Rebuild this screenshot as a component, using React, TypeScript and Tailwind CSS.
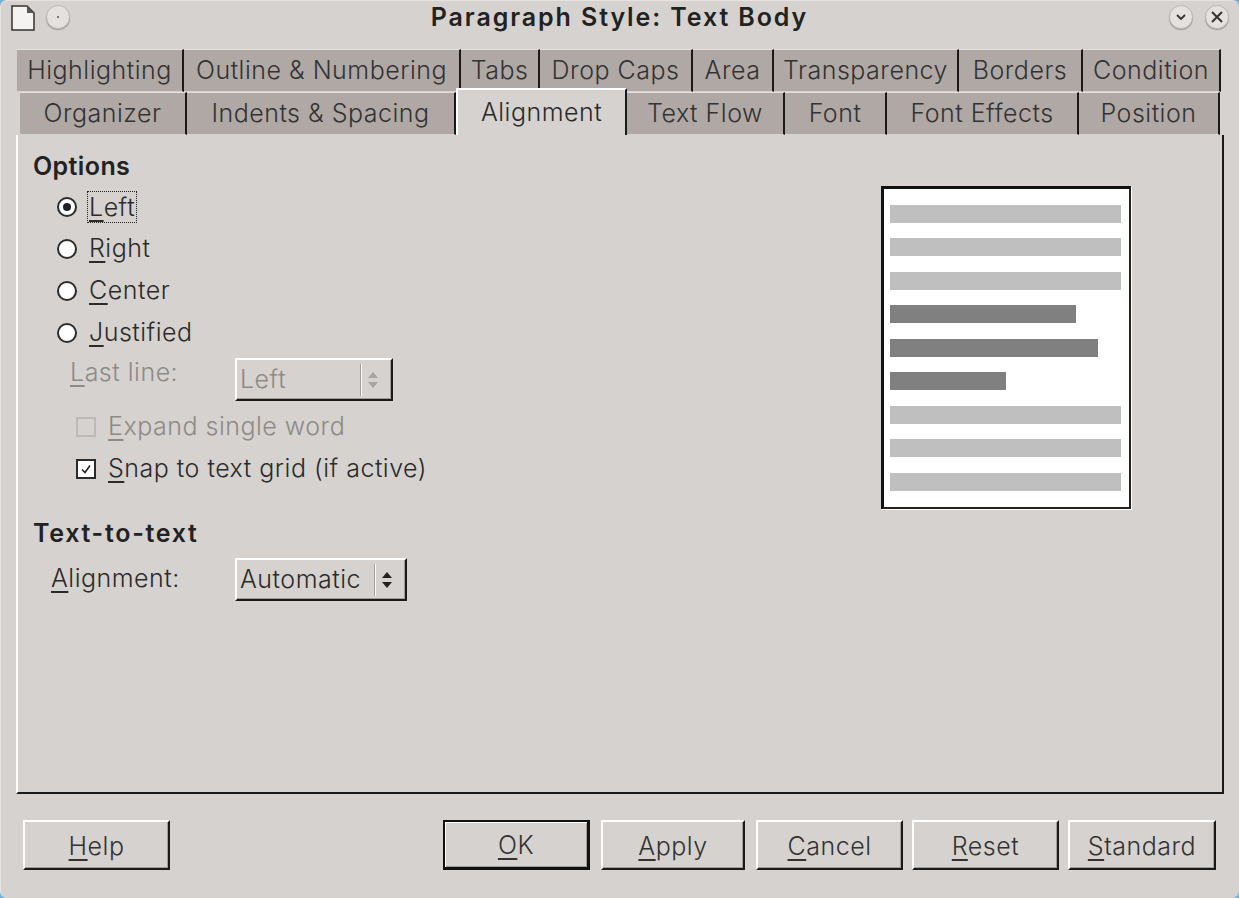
import type { ReactNode } from 'react'

const ROW_ONE = [
  { label: 'Highlighting', width: 'w-[167px]' },
  { label: 'Outline & Numbering', width: 'w-[277px]' },
  { label: 'Tabs', width: 'w-[79px]' },
  { label: 'Drop Caps', width: 'w-[153px]' },
  { label: 'Area', width: 'w-[81px]' },
  { label: 'Transparency', width: 'w-[185px]' },
  { label: 'Borders', width: 'w-[124px]' },
  { label: 'Condition', width: 'w-[138px]' },
]

const ROW_TWO = [
  { label: 'Organizer', width: 'w-[167px]' },
  { label: 'Indents & Spacing', width: 'w-[269px]' },
  { label: 'Alignment', width: 'w-[171px]', active: true },
  { label: 'Text Flow', width: 'w-[158px]' },
  { label: 'Font', width: 'w-[102px]' },
  { label: 'Font Effects', width: 'w-[192px]' },
  { label: 'Position', width: 'w-[141px]' },
]

const BEVEL = 'border-2 border-t-white border-l-white border-r-[#1a1a1a] border-b-[#1a1a1a] shadow-[inset_-1px_-1px_0_#a19d9a]'

function Tab({ label, width, active }: { label: string; width: string; active?: boolean }) {
  if (active) {
    return (
      <div className={`${width} relative z-10 -mt-1 h-[47px] shrink-0 flex items-center justify-center bg-[#d6d2cf] border-l-2 border-t-2 border-t-white border-l-white border-r-2 border-r-[#1a1a1a] text-[#2b2b2b]`}>
        {label}
      </div>
    )
  }
  return (
    <div className={`${width} h-full shrink-0 flex items-center justify-center bg-[#b0a8a5] border-t border-t-[#e4e0de] border-b border-b-[#d6d2cf] border-r-2 border-r-[#1a1a1a] text-[#333] pt-[1px]`}>
      {label}
    </div>
  )
}

function Mn({ k, rest }: { k: string; rest: string }) {
  return (
    <span>
      <u className="underline decoration-2 underline-offset-[4px]">{k}</u>
      {rest}
    </span>
  )
}

function Radio({ checked }: { checked?: boolean }) {
  return (
    <span className="h-5 w-5 shrink-0 rounded-full bg-white border-2 border-[#2b2b2b] flex items-center justify-center">
      {checked && <span className="h-2 w-2 rounded-full bg-[#222]" />}
    </span>
  )
}

function RadioRow({ children, checked, focused }: { children: ReactNode; checked?: boolean; focused?: boolean }) {
  return (
    <div className="h-[42px] flex items-center gap-[12px]">
      <Radio checked={checked} />
      <span className={focused ? 'outline-1 outline-dotted outline-[#222] leading-[30px] h-[30px] px-[1px] -ml-[1px]' : ''}>{children}</span>
    </div>
  )
}

function Spin({ disabled }: { disabled?: boolean }) {
  const c = disabled ? '#a8a4a1' : '#222'
  return (
    <svg width="12" height="20" viewBox="0 0 12 20">
      <path d="M6 2 L11 8 L1 8 Z" fill={c} />
      <path d="M1 12 L11 12 L6 18 Z" fill={c} />
    </svg>
  )
}

function Btn({ children, width, def, className = '' }: { children: ReactNode; width: string; def?: boolean; className?: string }) {
  const cls = def
    ? 'border-2 border-[#111] border-b-[3px] border-r-[3px] shadow-[inset_1px_1px_0_#fff,inset_-1px_-1px_0_#a19d9a]'
    : BEVEL
  return (
    <div className={`${width} ${cls} ${className} h-[50px] flex items-center justify-center text-[#333] pt-[3px]`}>
      {children}
    </div>
  )
}

function RoundButton({ children }: { children?: ReactNode }) {
  return (
    <span className="h-[24px] w-[24px] rounded-full bg-[#e4e1de] border border-[#bdb9b6] shadow-[0_1px_1px_#9c9895] flex items-center justify-center">
      {children}
    </span>
  )
}

function PreviewBar({ width, dark }: { width: string; dark?: boolean }) {
  return <div className={`${width} h-[18px] ${dark ? 'bg-[#808080]' : 'bg-[#bfbfbf]'}`} />
}

export default function App() {
  return (
    <div className="h-[898px] w-[1239px] bg-[#6fb3dc] overflow-hidden font-['Inter',sans-serif] font-light text-[25px] tracking-[0.5px] text-[#2b2b2b]">
      <div className="h-full rounded-[7px] bg-[#d6d2cf] border-l border-l-[#e6e3e1] border-t border-t-[#e6e3e1] flex flex-col">
        {/* Title bar */}
        <div className="h-[48px] shrink-0 flex items-start pt-[4px] pl-[10px] pr-[10px]">
          <svg width="24" height="26" viewBox="0 0 24 26" className="shrink-0">
            <path d="M1 1 H16 L23 8 V25 H1 Z" fill="#f4f3f2" stroke="#333" strokeWidth="1.5" />
            <path d="M16 1 L23 8 H16 Z" fill="#555" />
          </svg>
          <span className="ml-[11px]">
            <RoundButton>
              <span className="h-[2px] w-[2px] rounded-full bg-[#555]" />
            </RoundButton>
          </span>
          <div className="flex-1 text-center font-semibold text-[#222] tracking-[1.9px] leading-[24px]">Paragraph Style: Text Body</div>
          <div className="flex items-center gap-[12px]">
            <RoundButton>
              <svg width="12" height="12" viewBox="0 0 12 12">
                <path d="M2 4 L6 8 L10 4" fill="none" stroke="#333" strokeWidth="1.8" />
              </svg>
            </RoundButton>
            <RoundButton>
              <svg width="14" height="14" viewBox="0 0 14 14">
                <path d="M2 2 L12 12 M12 2 L2 12" fill="none" stroke="#333" strokeWidth="2" />
              </svg>
            </RoundButton>
          </div>
        </div>

        {/* Tabs */}
        <div className="pl-[16px] h-[43px] flex shrink-0">
          {ROW_ONE.map((t) => (
            <Tab key={t.label} label={t.label} width={t.width} />
          ))}
        </div>
        <div className="pl-[19px] h-[43px] flex shrink-0">
          {ROW_TWO.map((t) => (
            <Tab key={t.label} label={t.label} width={t.width} active={t.active} />
          ))}
        </div>

        {/* Panel */}
        <div className="ml-[15px] mr-[15px] h-[659px] shrink-0 border-l-2 border-l-white border-r-2 border-r-[#1a1a1a] border-b-2 border-b-[#1a1a1a] flex pl-[15px] pr-[91px] pt-[15px]">
          <div className="flex-1 flex flex-col">
            <div className="font-semibold text-[#222] tracking-[0.4px] h-[32px] leading-[32px]">Options</div>
            <div className="pl-[24px] pt-[4px]">
              <RadioRow checked focused><Mn k="L" rest="eft" /></RadioRow>
              <RadioRow><Mn k="R" rest="ight" /></RadioRow>
              <RadioRow><Mn k="C" rest="enter" /></RadioRow>
              <RadioRow><Mn k="J" rest="ustified" /></RadioRow>
            </div>
            <div className="pl-[37px] flex items-start text-[#8d8a87] h-[46px] mt-[4px]">
              <span className="w-[165px] -mt-[4px]"><Mn k="L" rest="ast line:" /></span>
              <div className={`${BEVEL} w-[158px] h-[43px] flex items-center pl-[3px] pr-[12px]`}>
                <span className="flex-1">Left</span>
                <span className="h-[32px] w-[2px] bg-white border-l border-l-[#a19d9a] mr-[5px]" />
                <Spin disabled />
              </div>
            </div>
            <div className="pl-[43px] flex flex-col mt-[2px]">
              <div className="h-[42px] flex items-center gap-[12px] text-[#8d8a87]">
                <span className="h-[20px] w-[20px] border-2 border-[#bdb9b6]" />
                <Mn k="E" rest="xpand single word" />
              </div>
              <div className="h-[42px] flex items-center gap-[12px]">
                <span className="h-[20px] w-[20px] bg-white border-2 border-[#2b2b2b] flex items-center justify-center">
                  <svg width="12" height="12" viewBox="0 0 12 12">
                    <path d="M2 6.5 L5 9.5 L10 2.5" fill="none" stroke="#222" strokeWidth="1.6" />
                  </svg>
                </span>
                <Mn k="S" rest="nap to text grid (if active)" />
              </div>
            </div>
            <div className="font-semibold text-[#222] tracking-[1.7px] h-[32px] leading-[32px] mt-[27px]">Text-to-text</div>
            <div className="pl-[18px] flex items-center h-[43px] mt-[9px]">
              <span className="w-[184px] -mt-[1px]"><Mn k="A" rest="lignment:" /></span>
              <div className={`${BEVEL} w-[172px] h-[43px] flex items-center pl-[3px] pr-[12px]`}>
                <span className="flex-1">Automatic</span>
                <span className="h-[32px] w-[2px] bg-white border-l border-l-[#a19d9a] mr-[5px]" />
                <Spin />
              </div>
            </div>
          </div>

          {/* Preview */}
          <div className="w-[250px] h-[323px] mt-[36px] shrink-0 bg-white border-l-[3px] border-t-[3px] border-l-[#111] border-t-[#111] border-r-2 border-b-2 border-r-[#222] border-b-[#222] shadow-[1px_1px_0_#fff] flex flex-col gap-[15.45px] pl-[6px] pt-[16px]">
            <PreviewBar width="w-[231px]" />
            <PreviewBar width="w-[231px]" />
            <PreviewBar width="w-[231px]" />
            <PreviewBar width="w-[186px]" dark />
            <PreviewBar width="w-[208px]" dark />
            <PreviewBar width="w-[116px]" dark />
            <PreviewBar width="w-[231px]" />
            <PreviewBar width="w-[231px]" />
            <PreviewBar width="w-[231px]" />
          </div>
        </div>

        {/* Footer */}
        <div className="pl-[22px] pr-[23px] pt-[26px] flex items-start">
          <Btn width="w-[147px]"><Mn k="H" rest="elp" /></Btn>
          <div className="flex-1" />
          <div className="flex">
            <Btn width="w-[147px]" def><Mn k="O" rest="K" /></Btn>
            <Btn width="w-[144px]" className="ml-[11px]"><Mn k="A" rest="pply" /></Btn>
            <Btn width="w-[147px]" className="ml-[11px]"><Mn k="C" rest="ancel" /></Btn>
            <Btn width="w-[147px]" className="ml-[9px]"><Mn k="R" rest="eset" /></Btn>
            <Btn width="w-[148px]" className="ml-[9px]"><Mn k="S" rest="tandard" /></Btn>
          </div>
        </div>
      </div>
    </div>
  )
}
